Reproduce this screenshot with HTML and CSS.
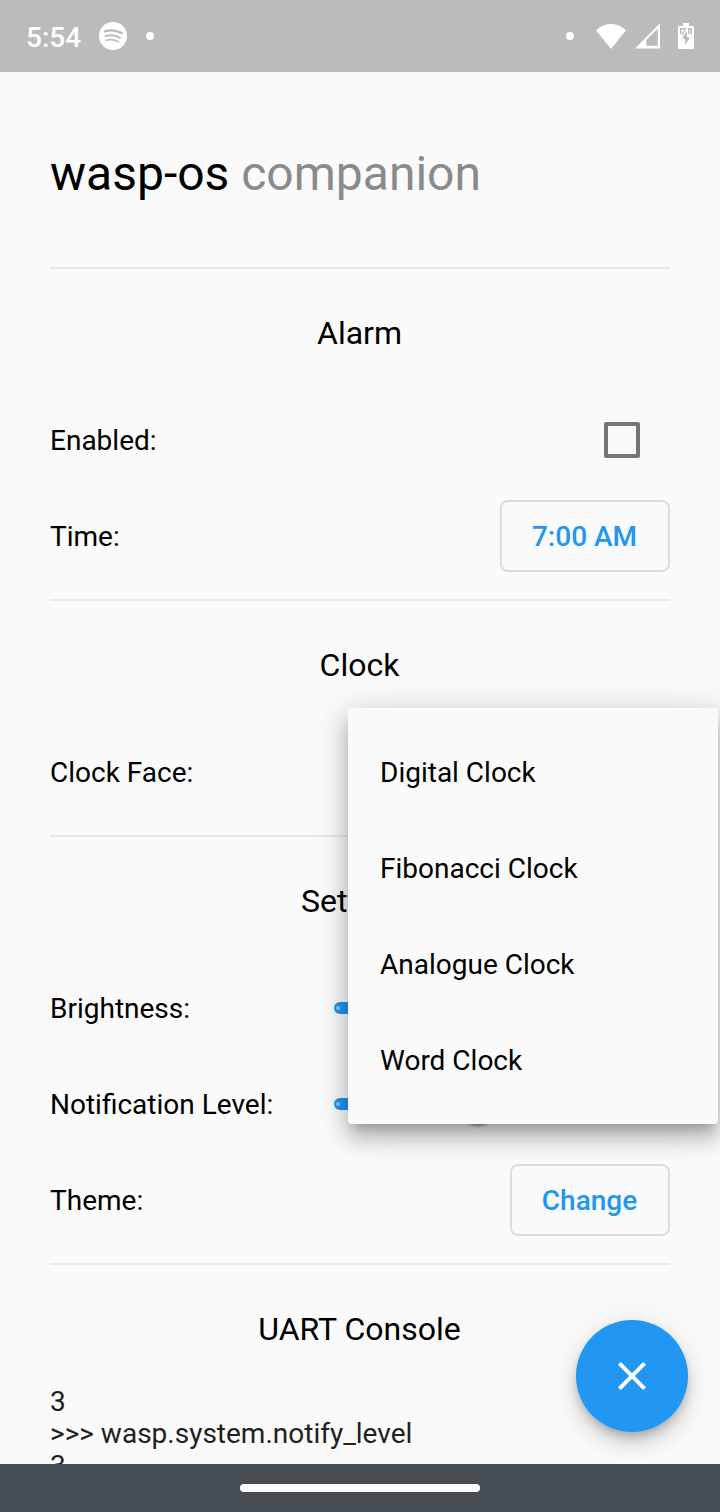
FILE: index.html
```html
<!DOCTYPE html>
<html lang="en">
<head>
<meta charset="utf-8">
<title>wasp-os companion</title>
<link rel="stylesheet" href="styles.css">
</head>
<body>
<div class="screen">
  <header class="status">
    <span class="time">5:54</span>
    <svg class="spotify" viewBox="0 0 28 28"><circle cx="14" cy="14" r="14" fill="#fff"/><g fill="none" stroke="#bbb" stroke-linecap="round"><path d="M5.800 9.300c5.600-1.500 12-.9 17.200 2" stroke-width="2.300"/><path d="M6.500 14c5-1.200 10.500-.6 14.600 1.800" stroke-width="2"/><path d="M7 18.200c4.400-1 8.700-.5 12.200 1.500" stroke-width="1.600"/></g></svg>
    <span class="dot"></span>
    <span class="space"></span>
    <span class="dot"></span>
    <svg class="wifi" viewBox="0 0 30 25"><path fill="#fff" d="M0 6.200C8.500-2.100 21.500-2.100 30 6.200L15 25z"/></svg>
    <svg class="signal" viewBox="0 0 26 26"><path fill="#fff" fill-rule="evenodd" d="M0 25.500L25 .3v25.200zM22.800 5.600L11.300 17v5.800h11.500z"/></svg>
    <svg class="battery" viewBox="0 0 16 27"><path fill="#fff" d="M5 0h6v3h3.500Q16 3 16 4.500v20Q16 26 14.500 26h-13Q0 26 0 24.500v-20Q0 3 1.500 3H5z"/><path fill="#bbb" d="M2 5h6.500L5 12H3.500l3-5.500H3.600V11H2zM10 5h4v6h-1.600V6.500h-1V11H10z"/><path fill="#bbb" d="M9 8v6.500h3L7 22v-6.500H4z"/></svg>
  </header>
  <main class="page">
    <h1 class="title">wasp-os <span class="muted">companion</span></h1>
    <hr class="divider">
    <h2 class="heading">Alarm</h2>
    <div class="row"><span class="label">Enabled:</span><span class="checkbox"></span></div>
    <div class="row"><span class="label">Time:</span><button class="button time-button">7:00 AM</button></div>
    <hr class="divider">
    <h2 class="heading">Clock</h2>
    <div class="row"><span class="label">Clock Face:</span></div>
    <hr class="divider">
    <h2 class="heading">Settings</h2>
    <div class="row"><span class="label">Brightness:</span><span class="slider"><span class="thumb"></span></span></div>
    <div class="row"><span class="label">Notification Level:</span><span class="slider"><span class="thumb"></span></span></div>
    <div class="row"><span class="label">Theme:</span><button class="button theme-button">Change</button></div>
    <hr class="divider">
    <h2 class="heading console-heading">UART Console</h2>
    <pre class="console">3
&gt;&gt;&gt; wasp.system.notify_level
3</pre>
  </main>
  <nav class="navbar"><span class="handle"></span></nav>
  <div class="menu">
    <div class="item">Digital Clock</div>
    <div class="item">Fibonacci Clock</div>
    <div class="item">Analogue Clock</div>
    <div class="item">Word Clock</div>
  </div>
  <button class="fab" aria-label="Close"><svg class="cross" viewBox="0 0 28 28"><path d="M1.400 1.400l25.200 25.200M26.600 1.400L1.400 26.600" stroke="#fff" stroke-width="4"/></svg></button>
</div>
</body>
</html>
```

FILE: styles.css
```css
* { box-sizing: border-box; }
body { margin: 0; font-family: Roboto, sans-serif; background: #fafafa; }
.screen { position: relative; width: 720px; height: 1512px; overflow: hidden; display: flex; flex-direction: column; }
.status { height: 72px; flex: none; background: #bbb; color: #fff; display: flex; align-items: center; padding: 0 26px; }
.time { width: 73px; font-size: 28px; font-weight: 500; line-height: 32px; padding-top: 3px; }
.spotify { width: 28px; height: 28px; margin-right: 19px; }
.dot { width: 8px; height: 8px; border-radius: 50%; background: #fff; }
.space { flex: 1; }
.wifi { width: 30px; height: 25px; margin-left: 22px; }
.signal { width: 26px; height: 26px; margin-left: 9px; }
.battery { width: 16px; height: 27px; margin-left: 17px; }
.page { flex: 1; min-height: 0; overflow: hidden; padding: 0 50px; }
.title { margin: 0; height: 180px; padding-top: 74px; font-size: 48px; line-height: 56px; font-weight: 400; color: #000; }
.muted { color: #8a8a8a; }
.divider { height: 2px; margin: 15px 0; border: 0; background: #e9e9e9; }
.heading { margin: 0; height: 108px; padding: 30px 1px 0 0; text-align: center; font-size: 32px; line-height: 38px; font-weight: 400; color: #000; }
.row { height: 96px; display: flex; align-items: center; justify-content: space-between; font-size: 28px; line-height: 32px; color: #000; }
.label { padding-top: 2px; }
.checkbox { width: 36px; height: 36px; margin-right: 30px; border: 4px solid #757575; border-radius: 2px; }
.button { height: 72px; padding: 2px 1px 0 0; border: 2px solid #dcdcdc; border-radius: 8px; background: transparent; color: #2196f3; font: 500 28px/32px Roboto, sans-serif; }
.time-button { width: 170px; }
.theme-button { width: 160px; }
.slider { width: 288px; height: 12px; margin-right: 48px; border-radius: 6px; background: radial-gradient(circle at 4px 6px, #90caf9 0 1.5px, transparent 2.3px), #2196f3; display: flex; align-items: center; }
.thumb { width: 40px; height: 40px; flex: none; margin-left: 124px; border-radius: 50%; background: #2196f3; box-shadow: 0 2px 3px rgba(0,0,0,.35); }
.console-heading { height: 106px; }
.console { margin: 0; font: 28px/32px Roboto, sans-serif; color: #212121; }
.navbar { height: 48px; flex: none; display: flex; justify-content: center; align-items: center; background: #454d53; }
.handle { width: 240px; height: 8px; border-radius: 4px; background: #fff; }
.menu { position: absolute; left: 348px; top: 708px; width: 370px; height: 416px; padding: 16px 32px; border-radius: 4px; background: #fafafa; box-shadow: 0 10px 10px -6px rgba(0,0,0,.2), 0 16px 20px 2px rgba(0,0,0,.14), 0 6px 28px 4px rgba(0,0,0,.12), 0 4px 44px rgba(0,0,0,.06); }
.item { height: 96px; padding-top: 2px; display: flex; align-items: center; font-size: 28px; line-height: 32px; color: #000; }
.fab { position: absolute; left: 576px; top: 1320px; width: 112px; height: 112px; padding: 0; border: 0; border-radius: 50%; background: #2196f3; display: flex; align-items: center; justify-content: center; box-shadow: 0 6px 10px -2px rgba(0,0,0,.2), 0 12px 20px rgba(0,0,0,.14), 0 2px 36px rgba(0,0,0,.08); }
.cross { width: 28px; height: 28px; }
```
